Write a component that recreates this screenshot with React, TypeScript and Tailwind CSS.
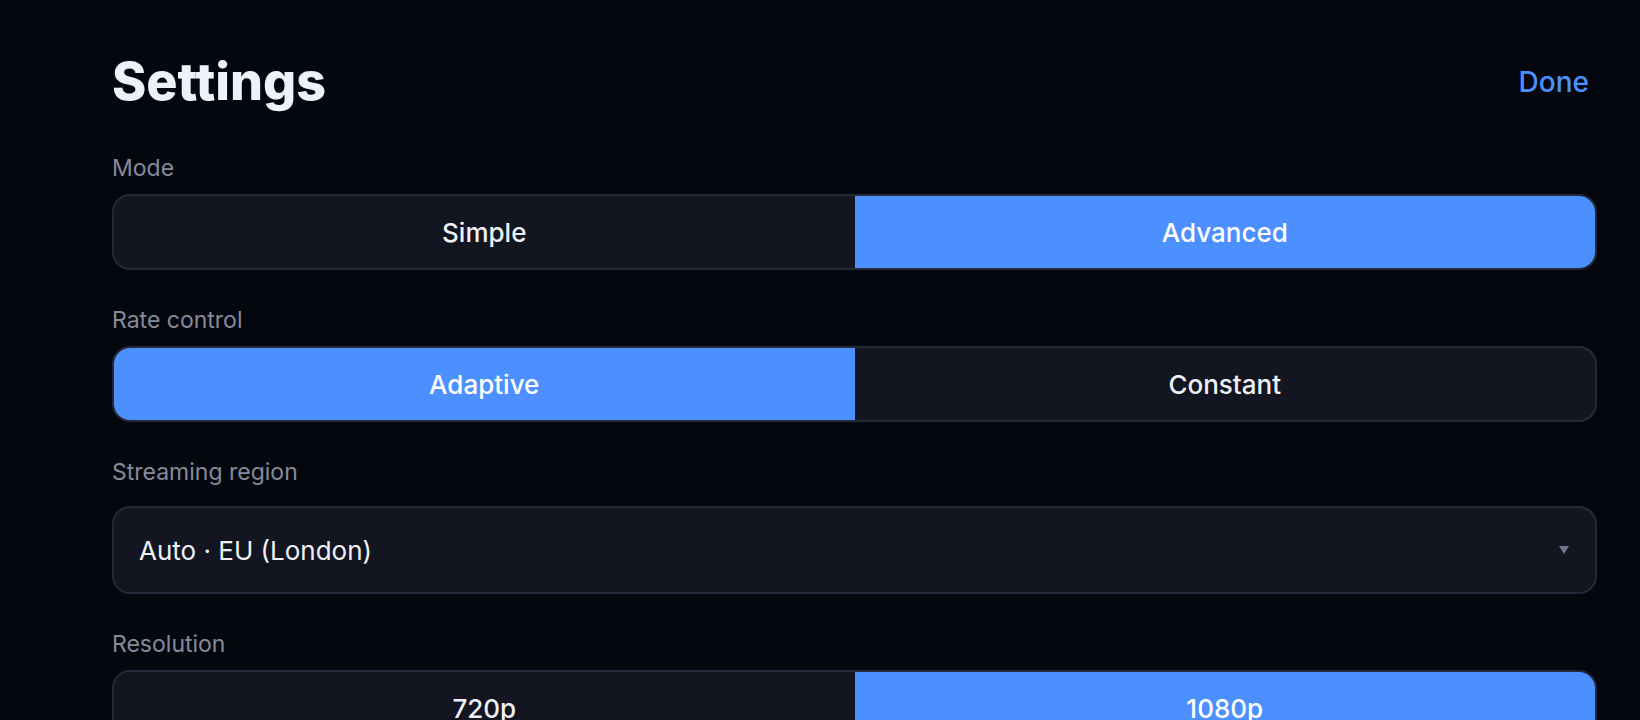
// Settings sheet: title row, segmented pickers and a region select.

import { useState } from "react";

const FONT = { fontFamily: "Inter, 'Noto Sans', sans-serif" };

type SegmentedProps = {
  options: string[];
  value: string;
  onChange: (v: string) => void;
};

function Segmented({ options, value, onChange }: SegmentedProps) {
  return (
    <div className="flex h-[76px] overflow-hidden rounded-[18px] border-2 border-[#242838] bg-[#131520]">
      {options.map((opt) => {
        const active = opt === value;
        return (
          <button
            key={opt}
            type="button"
            onClick={() => onChange(opt)}
            className={
              active
                ? "flex flex-1 items-center justify-center bg-[#4c8ffe] text-[26px] font-medium text-white"
                : "flex flex-1 items-center justify-center text-[26px] font-medium text-[#eef0f6]"
            }
          >
            {opt}
          </button>
        );
      })}
    </div>
  );
}

function Label({ children, className = "mb-3" }: { children: string; className?: string }) {
  return <p className={`${className} text-[23px] leading-[28px] text-[#858a9c]`}>{children}</p>;
}

export default function App() {
  const [mode, setMode] = useState("Advanced");
  const [rate, setRate] = useState("Adaptive");
  const [res, setRes] = useState("1080p");

  return (
    <div className="min-h-screen overflow-hidden bg-[#05070f] pl-[112px] pt-[56px]" style={FONT}>
      <div className="w-[1485px]">
        {/* ------------------------------------------------------- header */}
        <div className="flex items-center justify-between pr-2">
          <h1 className="text-[52px] leading-[52px] font-extrabold text-[#eef1f8]">Settings</h1>
          <button type="button" className="text-[28px] leading-[28px] font-medium text-[#4c8ffe]">
            Done
          </button>
        </div>

        {/* ------------------------------------------------------- mode */}
        <div className="mt-[46px]">
          <Label>Mode</Label>
          <Segmented options={["Simple", "Advanced"]} value={mode} onChange={setMode} />
        </div>

        {/* ------------------------------------------------- rate control */}
        <div className="mt-9">
          <Label>Rate control</Label>
          <Segmented options={["Adaptive", "Constant"]} value={rate} onChange={setRate} />
        </div>

        {/* --------------------------------------------- streaming region */}
        <div className="mt-9">
          <Label className="mb-5">Streaming region</Label>
          <div className="flex h-[88px] items-center justify-between rounded-[18px] border-2 border-[#242838] bg-[#131520] pl-[25px] pr-[26px]">
            <span className="text-[26px] text-[#eef0f6]">Auto · EU (London)</span>
            <svg width="10" height="8" viewBox="0 0 10 8" className="text-[#70778a]">
              <path d="M0 0h10L5 8z" fill="currentColor" />
            </svg>
          </div>
        </div>

        {/* --------------------------------------------------- resolution */}
        <div className="mt-9">
          <Label>Resolution</Label>
          <Segmented options={["720p", "1080p"]} value={res} onChange={setRes} />
        </div>
      </div>
    </div>
  );
}
